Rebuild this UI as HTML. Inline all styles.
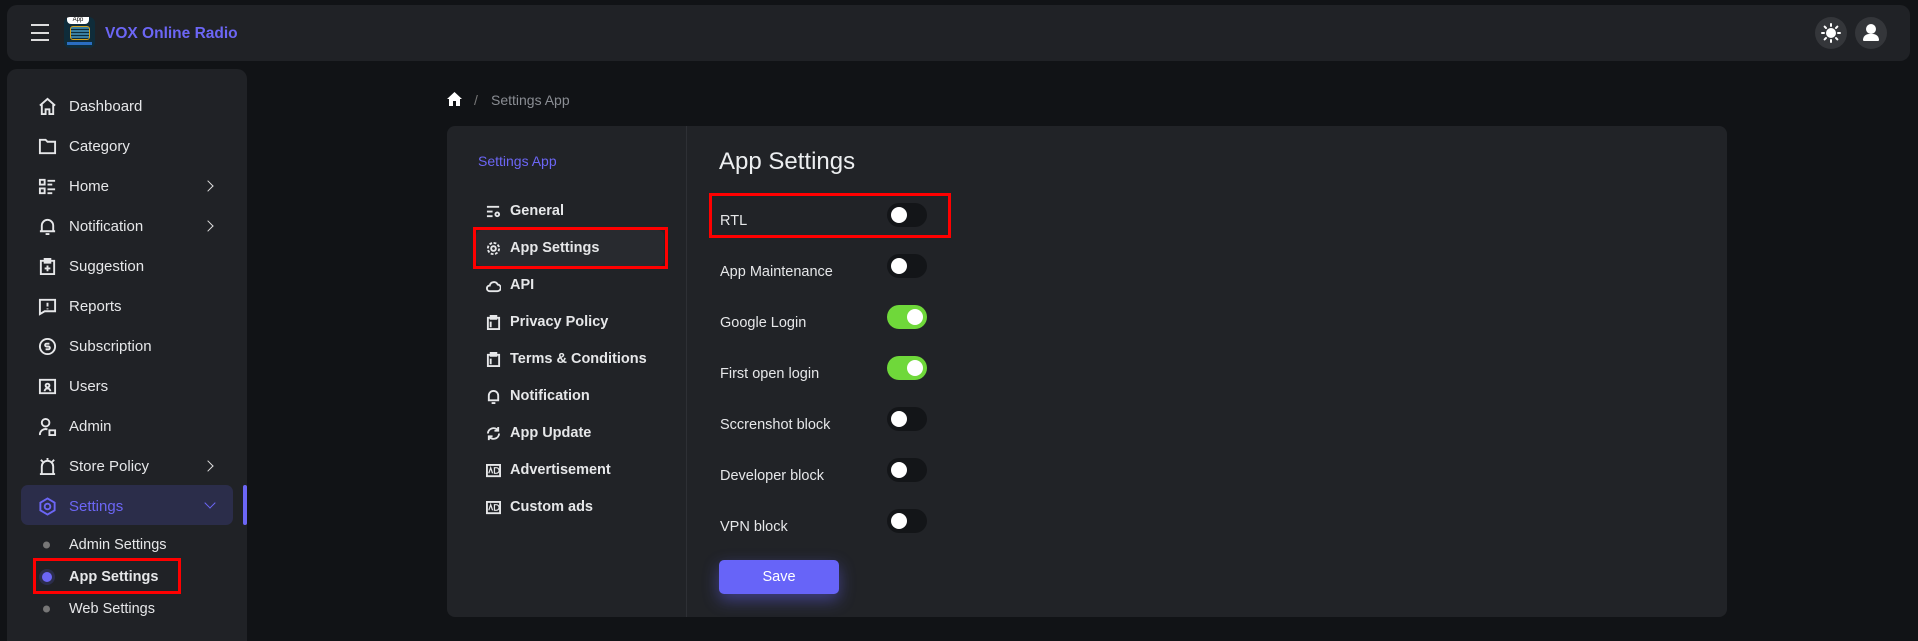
<!DOCTYPE html>
<html><head><meta charset="utf-8"><style>
*{margin:0;padding:0;box-sizing:border-box}
html,body{width:1918px;height:641px;overflow:hidden}
body{background:#111316;font-family:"Liberation Sans",sans-serif;color:#e8e9eb;position:relative}
.a{position:absolute}
.hdr{left:7px;top:5px;width:1903px;height:56px;background:#202226;border-radius:10px}
.side{left:7px;top:69px;width:240px;height:572px;background:#202226;border-radius:10px 10px 0 0}
.mi{position:absolute;left:38px;height:20px;display:flex;align-items:center;font-size:15px;font-weight:500;color:#e6e7e9}
.mi svg{width:19px;height:19px;margin-right:12px;fill:none;stroke:#e6e7e9;stroke-width:2}
.chev{position:absolute;left:204px;width:8px;height:8px;border-right:1.6px solid #ddd;border-top:1.6px solid #ddd;transform:rotate(45deg)}
.sub{position:absolute;left:69px;font-size:14.5px;font-weight:500;color:#e6e7e9;transform:translateY(-50%)}
.dot{position:absolute;left:43px;width:7px;height:7px;border-radius:50%;background:#777;transform:translateY(-50%)}
.card{left:447px;top:126px;width:1280px;height:491px;background:#212327;border-radius:8px}
.ni{position:absolute;left:486px;display:flex;align-items:center;font-size:14.5px;font-weight:bold;color:#e6e7e9;transform:translateY(-50%)}
.ni svg{width:15px;height:15px;margin-right:9px;fill:none;stroke:#e6e7e9;stroke-width:2}
.lb{position:absolute;left:720px;font-size:14.5px;color:#e6e7e9;transform:translateY(-50%)}
.tg{position:absolute;left:887px;width:40px;height:24px;border-radius:12px;background:#131518;transform:translateY(-50%)}
.tg::after{content:"";position:absolute;left:4px;top:4px;width:16px;height:16px;border-radius:50%;background:#fff}
.tg.on{background:#6fd83a}.tg.on::after{left:20px}
.red{position:absolute;border:3px solid #ff0000}
</style></head><body>
<div class="a hdr"></div>
<div class="a" style="left:31px;top:24px;width:18px;height:17px;border-top:2px solid #ddd;border-bottom:2px solid #ddd"><div style="margin-top:5.5px;height:2px;background:#ddd"></div></div>
<div class="a" style="left:64px;top:17px;width:31px;height:31px;border-radius:6px;background:#0f2c3a;overflow:hidden"><div style="position:absolute;left:3px;top:0;width:22px;height:7px;background:#fff;border-radius:0 0 4px 4px;font-size:6px;line-height:7px;color:#000;text-align:center">App</div><div style="position:absolute;left:6px;top:9px;width:20px;height:14px;border:1.5px solid #d6a520;border-radius:3px;background:repeating-linear-gradient(#3a7ea0 0 2px,#0f2c3a 2px 3px)"></div><div style="position:absolute;left:3px;top:25px;width:25px;height:3px;background:#2a6dc0"></div></div>
<div class="a" style="left:105px;top:25px;font-size:15.5px;font-weight:bold;color:#6c66f5">VOX Online Radio</div>
<div class="a" style="left:1815px;top:17px;width:32px;height:32px;border-radius:50%;background:#34363a"></div>
<svg class="a" style="left:1821px;top:23px" width="20" height="20" viewBox="0 0 20 20"><circle cx="10" cy="10" r="5" fill="#fff"/><g stroke="#fff" stroke-width="2" stroke-linecap="round"><path d="M10 1v2M10 17v2M1 10h2M17 10h2M3.6 3.6l1.4 1.4M15 15l1.4 1.4M3.6 16.4 5 15M15 5l1.4-1.4"/></g></svg>
<div class="a" style="left:1855px;top:17px;width:32px;height:32px;border-radius:50%;background:#34363a"></div>
<div class="a" style="left:1866px;top:24px;width:10px;height:10px;border-radius:50%;background:#fff"></div>
<div class="a" style="left:1863px;top:34px;width:16px;height:7px;border-radius:6px 6px 1px 1px;background:#fff"></div>

<div class="a side"></div>
<div class="mi" style="top:96px"><svg viewBox="0 0 20 20"><path d="M2 9 10 2l8 7M4 8v10h4v-5h4v5h4V8"/></svg>Dashboard</div>
<div class="mi" style="top:136px"><svg viewBox="0 0 20 20"><path d="M2 3h6l2 2h8v12H2z"/></svg>Category</div>
<div class="mi" style="top:176px"><svg viewBox="0 0 20 20"><path d="M2 3h5v5H2zM2 12h5v5H2zM10 4h8M10 8h5M10 13h8M10 17h5"/></svg>Home</div>
<div class="chev" style="top:182px"></div>
<div class="mi" style="top:216px"><svg viewBox="0 0 20 20"><path d="M4 15V9a6 6 0 0 1 12 0v6h2H2zM8 18h4"/></svg>Notification</div>
<div class="chev" style="top:222px"></div>
<div class="mi" style="top:256px"><svg viewBox="0 0 20 20"><path d="M3 4h14v14H3zM7 2h6v4H7zM10 9v6M7 12h6"/></svg>Suggestion</div>
<div class="mi" style="top:296px"><svg viewBox="0 0 20 20"><path d="M2 3h16v12H7l-5 3zM10 6v4M10 12v1"/></svg>Reports</div>
<div class="mi" style="top:336px"><svg viewBox="0 0 20 20"><circle cx="10" cy="10" r="8"/><path d="M12 7H9a1.5 1.5 0 0 0 0 3h2a1.5 1.5 0 0 1 0 3H8"/></svg>Subscription</div>
<div class="mi" style="top:376px"><svg viewBox="0 0 20 20"><path d="M2 3h16v14H2zM7 15a3 3 0 0 1 6 0M10 7a2 2 0 1 0 0 4 2 2 0 0 0 0-4"/></svg>Users</div>
<div class="mi" style="top:416px"><svg viewBox="0 0 20 20"><circle cx="8" cy="6" r="4"/><path d="M2 19a6 6 0 0 1 8-6M12 14h6v5h-6z"/></svg>Admin</div>
<div class="mi" style="top:456px"><svg viewBox="0 0 20 20"><path d="M4 18V10a6 6 0 0 1 12 0v8zM2 18h16M3 3l2 2M17 3l-2 2M10 1v2"/></svg>Store Policy</div>
<div class="chev" style="top:462px"></div>
<div class="a" style="left:21px;top:485px;width:212px;height:40px;border-radius:7px;background:#2b2d4a"></div>
<div class="a" style="left:243px;top:485px;width:4px;height:40px;border-radius:2px;background:#6c66f5"></div>
<div class="mi" style="top:496px;color:#6c66f5"><svg viewBox="0 0 20 20" style="stroke:#6c66f5"><path d="M10 1.5 17.5 6v8L10 18.5 2.5 14V6z"/><circle cx="10" cy="10" r="3"/></svg>Settings</div>
<div class="a" style="left:206px;top:499px;width:8px;height:8px;border-right:1.6px solid #6c66f5;border-bottom:1.6px solid #6c66f5;transform:rotate(45deg)"></div>
<div class="dot" style="top:545px"></div><div class="sub" style="top:545px">Admin Settings</div>
<div class="dot" style="top:577px;width:10px;height:10px;left:42px;background:#6c66f5;box-shadow:0 0 0 3px #2b2d4a"></div><div class="sub" style="top:577px;font-weight:bold">App Settings</div>
<div class="dot" style="top:609px"></div><div class="sub" style="top:609px">Web Settings</div>
<div class="red" style="left:33px;top:558px;width:148px;height:36px"></div>

<svg class="a" style="left:447px;top:92px" width="15" height="14" viewBox="0 0 15 14"><path d="M7.5 0 15 7h-2v7H9V9H6v5H2V7H0z" fill="#fff"/></svg>
<div class="a" style="left:474px;top:92px;font-size:14px;color:#777">/</div>
<div class="a" style="left:491px;top:92px;font-size:14px;color:#8a8d93">Settings App</div>

<div class="a card"></div>
<div class="a" style="left:686px;top:126px;width:1px;height:491px;background:#2e3035"></div>
<div class="a" style="left:478px;top:153px;font-size:14px;font-weight:500;color:#6c66f5">Settings App</div>
<div class="a" style="left:476px;top:230px;width:188px;height:36px;border-radius:6px;background:#282a2f"></div>
<div class="ni" style="top:211px"><svg viewBox="0 0 16 16"><path d="M1 3h13M1 8h6M1 13h6"/><circle cx="12" cy="11" r="2"/></svg>General</div>
<div class="ni" style="top:248px"><svg viewBox="0 0 16 16"><circle cx="8" cy="8" r="2.5"/><circle cx="8" cy="8" r="6" stroke-dasharray="3 1.7"/></svg>App Settings</div>
<div class="ni" style="top:285px"><svg viewBox="0 0 16 16"><path d="M4 14a3 3 0 0 1 0-6 4.5 4.5 0 0 1 8.5-1A3.5 3.5 0 0 1 12 14z"/></svg>API</div>
<div class="ni" style="top:322px"><svg viewBox="0 0 16 16"><path d="M2 3h12v12H2zM5 1h6v3H5zM5 7v6"/></svg>Privacy Policy</div>
<div class="ni" style="top:359px"><svg viewBox="0 0 16 16"><path d="M2 3h12v12H2zM5 1h6v3H5zM5 7v6"/></svg>Terms &amp; Conditions</div>
<div class="ni" style="top:396px"><svg viewBox="0 0 16 16"><path d="M3 12V7a5 5 0 0 1 10 0v5h1H2zM6 15h4"/></svg>Notification</div>
<div class="ni" style="top:433px"><svg viewBox="0 0 16 16"><path d="M2 8a6 6 0 0 1 11-3M14 8a6 6 0 0 1-11 3M13 1v4H9M3 15v-4h4"/></svg>App Update</div>
<div class="ni" style="top:470px"><svg viewBox="0 0 16 16"><path d="M1 2h14v12H1z"/><path d="M3 11l2-6 2 6M9 5v6h2a2 2 0 0 0 0-6z" stroke-width="1.3"/></svg>Advertisement</div>
<div class="ni" style="top:507px"><svg viewBox="0 0 16 16"><path d="M1 2h14v12H1z"/><path d="M3 11l2-6 2 6M9 5v6h2a2 2 0 0 0 0-6z" stroke-width="1.3"/></svg>Custom ads</div>
<div class="red" style="left:473px;top:227px;width:195px;height:42px"></div>

<div class="a" style="left:719px;top:148px;font-size:24px;font-weight:500;color:#eceef0">App Settings</div>
<div class="lb" style="top:221px">RTL</div><div class="tg" style="top:215px"></div>
<div class="lb" style="top:272px">App Maintenance</div><div class="tg" style="top:266px"></div>
<div class="lb" style="top:323px">Google Login</div><div class="tg on" style="top:317px"></div>
<div class="lb" style="top:374px">First open login</div><div class="tg on" style="top:368px"></div>
<div class="lb" style="top:425px">Sccrenshot block</div><div class="tg" style="top:419px"></div>
<div class="lb" style="top:476px">Developer block</div><div class="tg" style="top:470px"></div>
<div class="lb" style="top:527px">VPN block</div><div class="tg" style="top:521px"></div>
<div class="red" style="left:709px;top:193px;width:242px;height:45px"></div>
<div class="a" style="left:719px;top:560px;width:120px;height:34px;border-radius:5px;background:#6764f8;box-shadow:0 6px 16px rgba(103,100,248,.45);font-size:14.5px;color:#fff;text-align:center;line-height:34px">Save</div>
</body></html>
